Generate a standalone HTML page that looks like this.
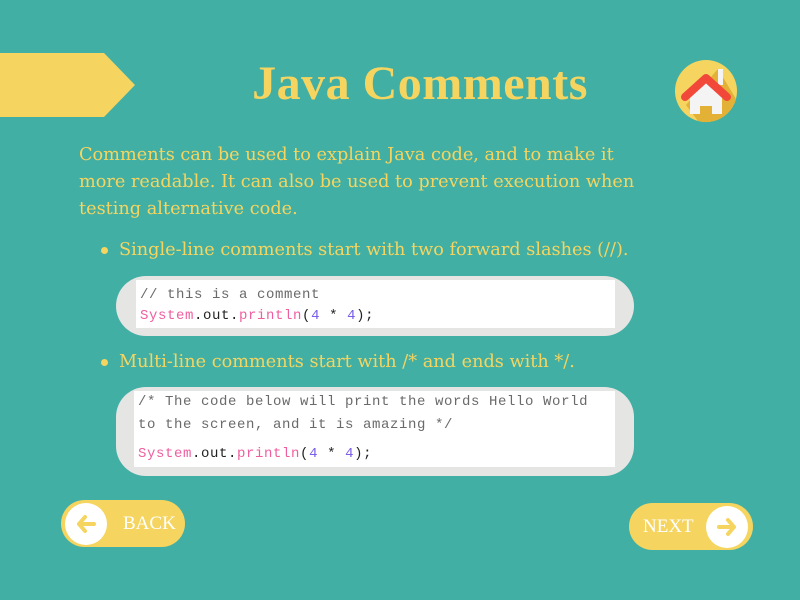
<!DOCTYPE html>
<html><head><style>
body{margin:0;width:800px;height:600px;background:#42AFA5;position:relative;overflow:hidden;font-family:"DejaVu Serif","Liberation Serif",serif;color:#F5D55F}
.ab{position:absolute}
h1{position:absolute;left:0;width:840px;top:56px;margin:0;text-align:center;font:bold 48px "Liberation Serif",serif;color:#F5D55F;letter-spacing:0.5px}
p{position:absolute;left:79px;top:142px;margin:0;font-size:17.7px;line-height:27px;width:580px}
.li{position:absolute;left:119px;font-size:17.7px}
.li:before{content:"";position:absolute;left:-18px;top:7px;width:7px;height:7px;border-radius:50%;background:#F5D55F}
.box{position:absolute;left:116px;width:518px;background:#E5E5E3;border-radius:30px}
.code{position:absolute;background:#fff;font:14px "Liberation Mono",monospace;color:#6a6a6a;white-space:pre;letter-spacing:0.6px}
.k{color:#EE5FA0}.n{color:#7B5FE8}.d{color:#222}
.btn{position:absolute;width:124px;height:47px;border-radius:24px;background:#F5D55F;color:#fff;font:19px "Liberation Serif",serif}
.c{position:absolute;width:42px;height:42px;border-radius:50%;background:#fff;top:2.5px}
</style></head><body>
<svg class="ab" style="left:0;top:53px" width="140" height="64"><polygon points="0,0 104,0 135,32 104,64 0,64" fill="#F5D55F"/></svg>
<h1>Java Comments</h1>
<svg class="ab" style="left:674px;top:59px" width="64" height="64">
<ellipse cx="32" cy="32" rx="31" ry="31" fill="#F5D55F"/>
<path d="M44 10 L62 40 A31 31 0 0 1 24 62 L12 46 Z" fill="#E2B135"/>
<rect x="44" y="10" width="5" height="16" fill="#F4F4F4"/>
<path d="M16 38 L32 24 L48 38 L48 55 L38 55 L38 47 L26 47 L26 55 L16 55 Z" fill="#F4F4F4"/>
<path d="M11 38 L32 19 L53 38" stroke="#F2483A" stroke-width="8" fill="none" stroke-linecap="round" stroke-linejoin="round"/>
</svg>
<p>Comments can be used to explain Java code, and to make it more readable. It can also be used to prevent execution when testing alternative code.</p>
<div class="li" style="top:240px">Single-line comments start with two forward slashes (//).</div>
<div class="box" style="top:276px;height:60px"></div>
<div class="code" style="left:136px;top:280px;width:479px;height:48px;line-height:21px;padding:5px 0 0 4px;box-sizing:border-box">// this is a comment
<span class="k">System</span><span class="d">.out.</span><span class="k">println</span><span class="d">(</span><span class="n">4</span><span class="d"> * </span><span class="n">4</span><span class="d">);</span></div>
<div class="li" style="top:352px">Multi-line comments start with /* and ends with */.</div>
<div class="box" style="top:387px;height:89px"></div>
<div class="code" style="left:134px;top:391px;width:481px;height:76px;line-height:23px;padding:0 0 0 4px;box-sizing:border-box">/* The code below will print the words Hello World
to the screen, and it is amazing */
<span class="k" style="line-height:34px">System</span><span class="d">.out.</span><span class="k">println</span><span class="d">(</span><span class="n">4</span><span class="d"> * </span><span class="n">4</span><span class="d">);</span></div>
<div class="btn" style="left:61px;top:500px"><div class="c" style="left:4px"><svg width="42" height="42"><path d="M29 21 H14 M20 14 L14 21 L20 28" stroke="#F5D55F" stroke-width="4" fill="none" stroke-linecap="round" stroke-linejoin="round"/></svg></div><span class="ab" style="left:62px;top:13px">BACK</span></div>
<div class="btn" style="left:629px;top:503px"><span class="ab" style="left:14px;top:13px">NEXT</span><div class="c" style="left:77px"><svg width="42" height="42"><path d="M13 21 H28 M22 14 L28 21 L22 28" stroke="#F5D55F" stroke-width="4" fill="none" stroke-linecap="round" stroke-linejoin="round"/></svg></div></div>
</body></html>
